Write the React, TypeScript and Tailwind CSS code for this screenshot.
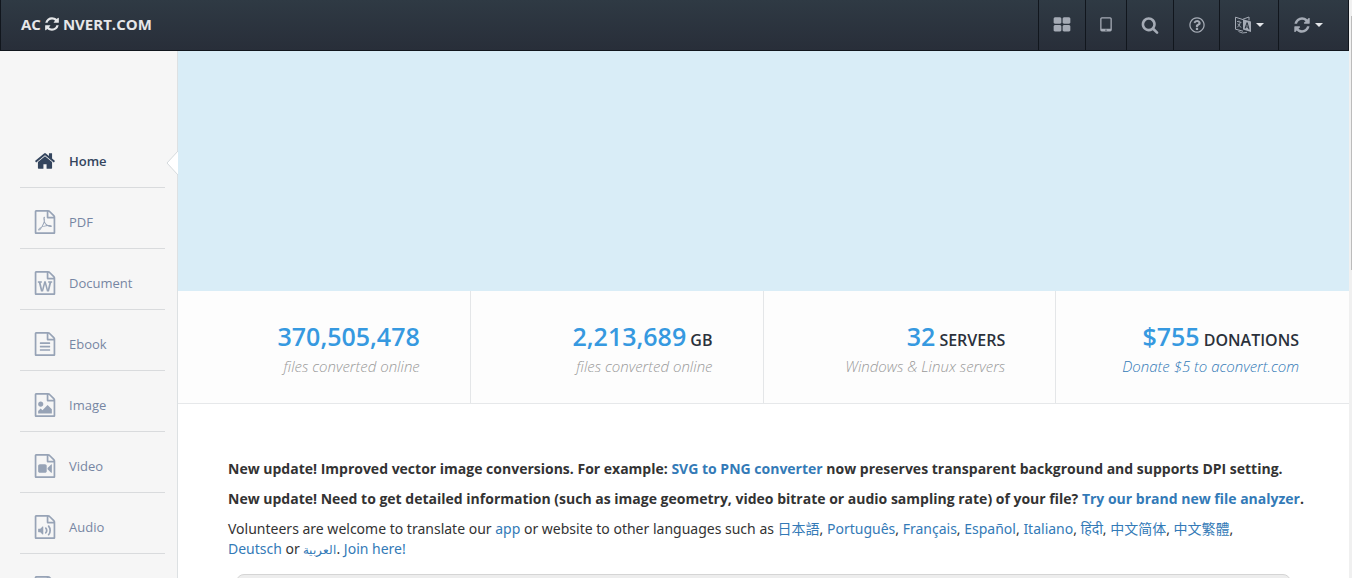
import React from 'react';

const FILE_OUTLINE =
  'M1596 380q28 28 48 76t20 88v1152q0 40-28 68t-68 28h-1344q-40 0-68-28t-28-68v-1600q0-40 28-68t68-28h896q40 0 88 20t76 48zm-444-244v376h376q-10-29-22-41l-313-313q-12-12-41-22zm384 1528v-1024h-416q-40 0-68-28t-28-68v-416h-768v1536h1280z';

const icons = {
  home: 'M1472 992v480q0 26-19 45t-45 19h-384v-384h-256v384h-384q-26 0-45-19t-19-45v-480q0-1 .5-3t.5-3l575-474 575 474q1 2 1 6zm223-69l-62 74q-8 9-21 11h-3q-13 0-21-7l-692-577-692 577q-12 8-24 7-13-2-21-11l-62-74q-8-10-7-23.5t11-21.5l719-599q32-26 76-26t76 26l244 204v-195q0-14 9-23t23-9h192q14 0 23 9t9 23v408l219 182q10 8 11 21.5t-7 23.5z',
  pdf: FILE_OUTLINE + 'm-514-593q33 26 84 56 59-7 117-7 147 0 177 49 16 22 2 52 0 1-1 2l-2 2v1q-6 38-71 38-48 0-115-20t-130-53q-221 24-392 83-153 262-242 262-15 0-28-7l-24-12q-1-1-6-5-10-10-6-36 9-40 56-91.5t132-96.5q14-9 23 6 2 2 2 4 52-85 107-197 68-136 104-262-24-82-30.5-159.5t6.5-127.5q11-40 42-40h22q23 0 35 15 18 21 9 68-2 6-4 8 1 3 1 8v30q-2 123-14 192 55 164 146 238zm-576 411q52-24 137-158-51 40-87.5 84t-49.5 74zm398-920q-15 42-2 132 1-7 7-44 0-3 7-43 1-4 4-8-1-1-1-2-1-2-1-3-1-22-13-36 0 1-1 2v2zm-124 661q135-54 284-81-2-1-13-9.5t-16-13.5q-76-67-127-176-27 86-83 197-30 56-45 83zm646-16q-24-24-140-24 76 28 124 28 14 0 18-1 0-1-2-3z',
  word: FILE_OUTLINE + 'm-1175-896v107h70l164 661h159l128-485q7-20 10-46 2-16 2-24h4l3 24q1 3 3.5 20t5.5 26l128 485h159l164-661h70v-107h-300v107h90l-99 438q-5 20-7 46l-2 21h-4q0-3-.5-6.5t-1.5-8-1-6.5q-1-5-4-21t-5-25l-144-545h-114l-144 545q-2 9-4.5 24.5t-3.5 21.5l-4 21h-4l-2-21q-2-26-7-46l-99-438h90v-107h-300z',
  text: FILE_OUTLINE + 'm-1024-864q0-14 9-23t23-9h704q14 0 23 9t9 23v64q0 14-9 23t-23 9h-704q-14 0-23-9t-9-23v-64zm736 224q14 0 23 9t9 23v64q0 14-9 23t-23 9h-704q-14 0-23-9t-9-23v-64q0-14 9-23t23-9h704zm0 256q14 0 23 9t9 23v64q0 14-9 23t-23 9h-704q-14 0-23-9t-9-23v-64q0-14 9-23t23-9h704z',
  image: FILE_OUTLINE + 'm-128-448v320h-1024v-192l192-192 128 128 384-384zm-832-192q-80 0-136-56t-56-136 56-136 136-56 136 56 56 136-56 136-136 56z',
  video: FILE_OUTLINE + 'm-640-896q52 0 90 38t38 90v384q0 52-38 90t-90 38h-384q-52 0-90-38t-38-90v-384q0-52 38-90t90-38h384zm492 2q20 8 20 30v576q0 22-20 30-8 2-12 2-14 0-23-9l-265-266v-90l265-266q9-9 23-9 4 0 12 2z',
  audio: FILE_OUTLINE + 'm-788-814q20 8 20 30v544q0 22-20 30-8 2-12 2-12 0-23-9l-166-167h-131q-14 0-23-9t-9-23v-192q0-14 9-23t23-9h131l166-167q16-15 35-7zm417 689q31 0 50-24 129-159 129-363t-129-363q-16-21-43-24t-47 14q-21 17-23.5 43.5t14.5 47.5q100 123 100 282t-100 282q-17 21-14.5 47.5t23.5 42.5q18 15 40 15zm-211-148q27 0 47-20 87-93 87-219t-87-219q-18-19-45-20t-46 17-20 44.5 18 46.5q52 57 52 131t-52 131q-19 20-18 46.5t20 44.5q20 17 44 17z',
  archive: FILE_OUTLINE,
  grid: 'M832 1024v384q0 52-38 90t-90 38h-512q-52 0-90-38t-38-90v-384q0-52 38-90t90-38h512q52 0 90 38t38 90zm0-768v384q0 52-38 90t-90 38h-512q-52 0-90-38t-38-90v-384q0-52 38-90t90-38h512q52 0 90 38t38 90zm896 768v384q0 52-38 90t-90 38h-512q-52 0-90-38t-38-90v-384q0-52 38-90t90-38h512q52 0 90 38t38 90zm0-768v384q0 52-38 90t-90 38h-512q-52 0-90-38t-38-90v-384q0-52 38-90t90-38h512q52 0 90 38t38 90z',
  tablet: 'M960 1408q0-26-19-45t-45-19-45 19-19 45 19 45 45 19 45-19 19-45zm384-160v-960q0-13-9.5-22.5t-22.5-9.5h-832q-13 0-22.5 9.5t-9.5 22.5v960q0 13 9.5 22.5t22.5 9.5h832q13 0 22.5-9.5t9.5-22.5zm128-960v1088q0 66-47 113t-113 47h-832q-66 0-113-47t-47-113v-1088q0-66 47-113t113-47h832q66 0 113 47t47 113z',
  search: 'M1216 832q0-185-131.5-316.5t-316.5-131.5-316.5 131.5-131.5 316.5 131.5 316.5 316.5 131.5 316.5-131.5 131.5-316.5zm512 832q0 52-38 90t-90 38q-54 0-90-38l-343-342q-179 124-399 124-143 0-273.5-55.5t-225-150-150-225-55.5-273.5 55.5-273.5 150-225 225-150 273.5-55.5 273.5 55.5 225 150 150 225 55.5 273.5q0 220-124 399l343 343q37 37 37 90z',
  help: 'M1008 1200v160q0 14-9 23t-23 9h-160q-14 0-23-9t-9-23v-160q0-14 9-23t23-9h160q14 0 23 9t9 23zm256-496q0 50-15 90t-45.5 69-52 44-59.5 36q-32 18-46.5 28t-26 24-11.5 29v32q0 14-9 23t-23 9h-160q-14 0-23-9t-9-23v-68q0-35 10.5-64.5t24-47.5 39-35.5 41-25.5 44.5-21q53-25 75-43t22-49q0-42-43.5-71.5t-95.5-29.5q-56 0-95 27-29 20-80 83-9 12-25 12-11 0-19-6l-108-82q-10-7-12-20t5-23q122-192 349-192 129 0 238.5 89.5t109.5 214.5zm-368-448q-130 0-248.5 51t-204 136.5-136.5 204-51 248.5 51 248.5 136.5 204 204 136.5 248.5 51 248.5-51 204-136.5 136.5-204 51-248.5-51-248.5-136.5-204-204-136.5-248.5-51zm768 640q0 209-103 385.5t-279.5 279.5-385.5 103-385.5-103-279.5-279.5-103-385.5 103-385.5 279.5-279.5 385.5-103 385.5 103 279.5 279.5 103 385.5z',
  refresh: 'M1639 1056q0 5-1 7-64 268-268 434.5t-478 166.5q-146 0-282.5-55t-243.5-157l-129 129q-19 19-45 19t-45-19-19-45v-448q0-26 19-45t45-19h448q26 0 45 19t19 45-19 45l-137 137q71 66 161 102t187 36q134 0 250-65t186-179q11-17 53-117 8-23 30-23h192q13 0 22.5 9.5t9.5 22.5zm25-800v448q0 26-19 45t-45 19h-448q-26 0-45-19t-19-45 19-45l138-138q-148-137-349-137-134 0-250 65t-186 179q-11 17-53 117-8 23-30 23h-199q-13 0-22.5-9.5t-9.5-22.5v-7q65-268 270-434.5t480-166.5q146 0 284 55.5t245 156.5l130-129q19-19 45-19t45 19 19 45z',
};

type IconName = keyof typeof icons;

const Icon = ({ name, className }: { name: IconName; className: string }) => (
  <svg className={className} viewBox="0 0 1792 1792" fill="currentColor" aria-hidden="true">
    <path d={icons[name]} />
  </svg>
);

const LanguageIcon = () => (
  <svg className="size-[18px]" viewBox="0 0 18 18" fill="none" stroke="currentColor" aria-hidden="true">
    <path d="M9 3.6L1.5 1.2V13.2L9 15.2" />
    <path d="M9 3.2L15 1v3.4" />
    <path fill="currentColor" stroke="none" fillRule="evenodd" d="M9 3.2L17 5.6V16L9 13.6zM12.6 6.3L10.6 12.2l1.1.3.4-1.2 1.9.5.4 1.4 1.2.3-1.9-6.9zM13 8l.7 2.8-1.3-.4z" />
    <path d="M3 5.4l4.4 1M5 4.6v1.3M3.2 11.4Q6 9.5 6.3 6.2M3.8 7.6Q5 10.4 7.3 11.4" strokeWidth="0.9" />
    <path d="M4.5 15.5Q8 18 13 16.4" strokeWidth="0.9" />
  </svg>
);

const Caret = () => <span className="border-x-4 border-t-4 border-x-transparent border-t-[#e4e6e9]" />;

const navItems: { icon: IconName; label: string }[] = [
  { icon: 'home', label: 'Home' },
  { icon: 'pdf', label: 'PDF' },
  { icon: 'word', label: 'Document' },
  { icon: 'text', label: 'Ebook' },
  { icon: 'image', label: 'Image' },
  { icon: 'video', label: 'Video' },
  { icon: 'audio', label: 'Audio' },
  { icon: 'archive', label: 'Archive' },
];

const stats = [
  { value: '370,505,478', unit: '', note: 'files converted online' },
  { value: '2,213,689', unit: 'GB', note: 'files converted online' },
  { value: '32', unit: 'SERVERS', note: 'Windows & Linux servers' },
  { value: '$755', unit: 'DONATIONS', note: 'Donate $5 to aconvert.com', link: true },
];

const languages = ['日本語', 'Português', 'Français', 'Español', 'Italiano', 'हिंदी', '中文简体', '中文繁體'];

const Link = ({ children }: { children: React.ReactNode }) => (
  <a href="#" className="text-[#337ab7] hover:underline">
    {children}
  </a>
);

const toolButton = 'flex items-center justify-center gap-1 border-l border-[#11161d] text-[#a5abb5] hover:text-white';

const Header = () => (
  <header className="flex h-[51px] shrink-0 justify-between border-x border-b border-[#11161d] bg-linear-to-b from-[#2f3a44] to-[#282e39]">
    <a href="#" className="flex items-center gap-[3px] pb-[2px] pl-5 text-[15px] font-bold text-[#e6e7e9]">
      <span>AC</span>
      <Icon name="refresh" className="size-4" />
      <span>NVERT.COM</span>
    </a>
    <nav className="flex">
      <button aria-label="Apps" className={`${toolButton} w-[47px]`}>
        <Icon name="grid" className="size-[18px]" />
      </button>
      <button aria-label="Mobile" className={`${toolButton} w-[41px]`}>
        <Icon name="tablet" className="size-[18px]" />
      </button>
      <button aria-label="Search" className={`${toolButton} w-[47px]`}>
        <Icon name="search" className="size-[18px]" />
      </button>
      <button aria-label="Help" className={`${toolButton} w-[46px]`}>
        <Icon name="help" className="size-[18px]" />
      </button>
      <button aria-label="Language" className={`${toolButton} w-[59px]`}>
        <LanguageIcon />
        <Caret />
      </button>
      <button aria-label="Convert" className={`${toolButton} w-[70px] pr-3`}>
        <Icon name="refresh" className="size-[18px]" />
        <Caret />
      </button>
    </nav>
  </header>
);

const Sidebar = () => (
  <nav className="w-[178px] shrink-0 border-r border-[#dde1e3] bg-[#f6f6f6] pt-[76px] pr-3 pl-5">
    {navItems.map((item, index) => (
      <div key={item.label} className="relative">
        <a
          href="#"
          className={`flex h-[61px] items-center gap-3 border-b border-[#d9dbdd] pt-2 pl-[13px] text-[13px] ${
            index === 0 ? 'font-semibold text-[#34455e]' : 'text-[#7686a3]'
          }`}
        >
          <span className="flex w-6 justify-center">
            <Icon name={item.icon} className={index === 0 ? 'size-[22px]' : 'size-6 text-[#97a3b6]'} />
          </span>
          <span className="pt-[2px]">{item.label}</span>
        </a>
        {/* Arrow marking the current page */}
        {index === 0 && (
          <svg className="absolute top-6 -right-[13px] h-6 w-3" viewBox="0 0 12 24" aria-hidden="true">
            <path d="M12 0L1 12L12 24" fill="#fff" stroke="#d5dadd" />
          </svg>
        )}
      </div>
    ))}
  </nav>
);

const Stats = () => (
  <section className="grid grid-cols-4 border-b border-[#e6e8ea] bg-[#fdfdfd]">
    {stats.map((stat, index) => (
      <div key={index} className="h-28 border-r border-[#e4e6e8] pt-[29px] pr-[50px] text-right last:border-r-0">
        <p className="text-base leading-8 font-semibold text-[#2b313b]">
          <span className="text-[25px] leading-8 text-[#3699e0]">{stat.value}</span>
          {stat.unit && ` ${stat.unit}`}
        </p>
        <p className="text-[15px] leading-5 font-light text-[#999] italic">
          {stat.link ? <Link>{stat.note}</Link> : stat.note}
        </p>
      </div>
    ))}
  </section>
);

const App = () => {
  return (
    <div className="flex h-screen overflow-hidden bg-white font-['Open_Sans','Noto_Sans','Noto_Sans_CJK_SC',sans-serif] text-[#333]">
      <div className="flex min-w-0 grow flex-col">
        <Header />
        <div className="flex min-h-0 grow">
          <Sidebar />
          <main className="min-w-0 grow">
            <div className="h-60 bg-[#d9edf7]" />
            <Stats />
            <section className="pt-[55px] pr-11 pl-[50px] text-sm leading-5">
              <p className="mb-[10px] font-bold">
                New update! Improved vector image conversions. For example: <Link>SVG to PNG converter</Link> now
                preserves transparent background and supports DPI setting.
              </p>
              <p className="mb-[10px] font-bold">
                New update! Need to get detailed information (such as image geometry, video bitrate or audio sampling
                rate) of your file? <Link>Try our brand new file analyzer</Link>.
              </p>
              <p className="pr-6 font-['Noto_Sans','Noto_Sans_CJK_SC',sans-serif]">
                Volunteers are welcome to translate our <Link>app</Link> or website to other languages such as{' '}
                {languages.map((language) => (
                  <React.Fragment key={language}>
                    <Link>{language}</Link>,{' '}
                  </React.Fragment>
                ))}
                <Link>Deutsch</Link> or{' '}
                <Link>
                  <span className="text-xs">العربية</span>
                </Link>
                . <Link>Join here!</Link>
              </p>
              <div className="mr-[14px] mt-[15px] ml-2 h-20 rounded-lg border border-[#d5d5d5] bg-[#ededed]" />
            </section>
          </main>
        </div>
      </div>
      {/* Scroll track */}
      <div className="flex w-[3px] shrink-0 justify-end bg-[#f0f0f0] pt-4">
        <div className="h-[254px] w-px bg-[#bcbcbc]" />
      </div>
    </div>
  );
};

export default App;
